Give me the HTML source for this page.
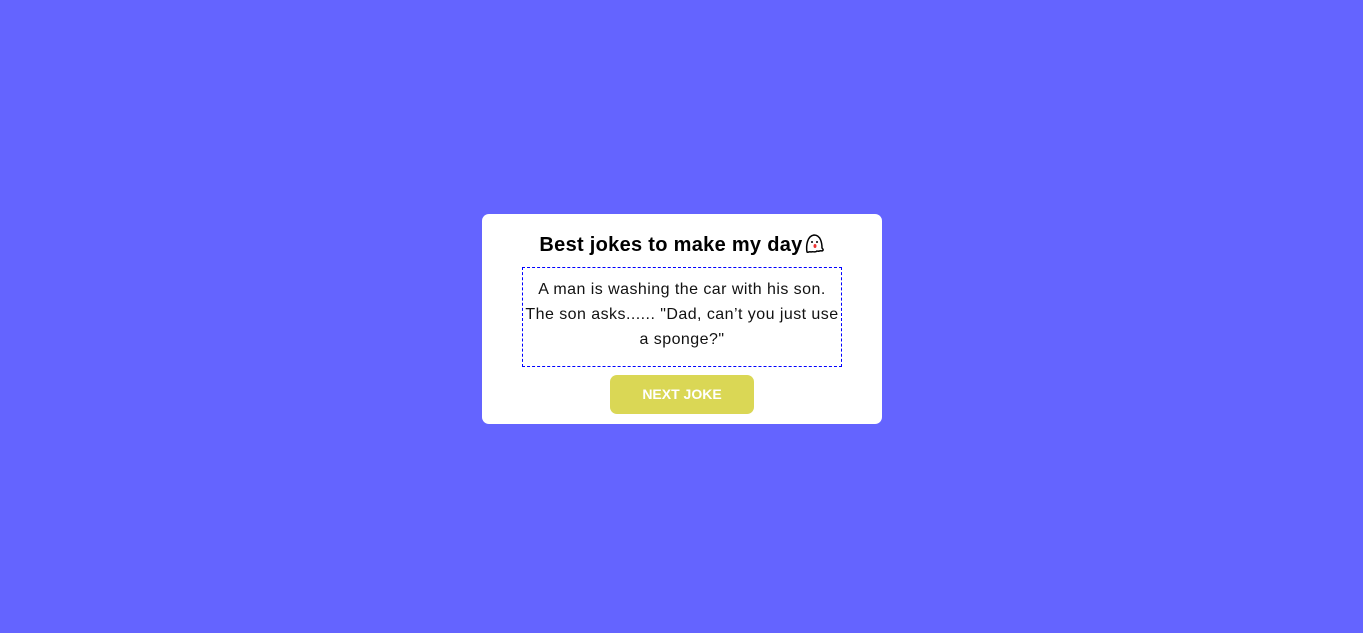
<!DOCTYPE html>
<html><head><meta charset="utf-8"><style>
html,body{margin:0;padding:0;}
body{width:1363px;height:633px;background:#6464ff;position:relative;font-family:"Liberation Sans",sans-serif;}
.card{position:absolute;left:482px;top:214px;width:400px;height:210px;background:#fff;border-radius:7px;}
h1{position:absolute;left:0;width:400px;top:18px;margin:0;text-align:center;font-size:20px;font-weight:bold;color:#000;line-height:26px;letter-spacing:0.3px;}
.joke{position:absolute;left:40px;top:53px;width:320px;height:100px;border:1px dashed #0000ff;text-align:center;font-size:16px;line-height:25px;color:#111;padding-top:9px;box-sizing:border-box;letter-spacing:0.45px;white-space:nowrap;}
.btn{position:absolute;left:128px;top:161px;width:144px;height:39px;background:#dad755;border-radius:7px;color:#fff;font-weight:bold;font-size:14px;text-align:center;line-height:39px;}
svg{vertical-align:-3px;}
</style></head><body>
<div class="card">
<h1>Best jokes to make my day<svg width="22" height="22" viewBox="0 0 22 22"><path d="M4 20 C3 14 4 4 11 3 C18 3 19 12 19 16 C20 17 21 18 19 19 C17 18 16 20 14 19 C12 21 10 19 8 20 C6 19 5 21 4 20Z" fill="#fff" stroke="#000" stroke-width="1.5"/><circle cx="9" cy="10" r="1" fill="#000"/><circle cx="14" cy="10" r="1" fill="#000"/><ellipse cx="12" cy="14" rx="1.5" ry="2" fill="#e33"/></svg></h1>
<div class="joke">A man is washing the car with his son.<br>The son asks...... "Dad, can’t you just use<br>a sponge?"</div>
<div class="btn">NEXT JOKE</div>
</div>
</body></html>
